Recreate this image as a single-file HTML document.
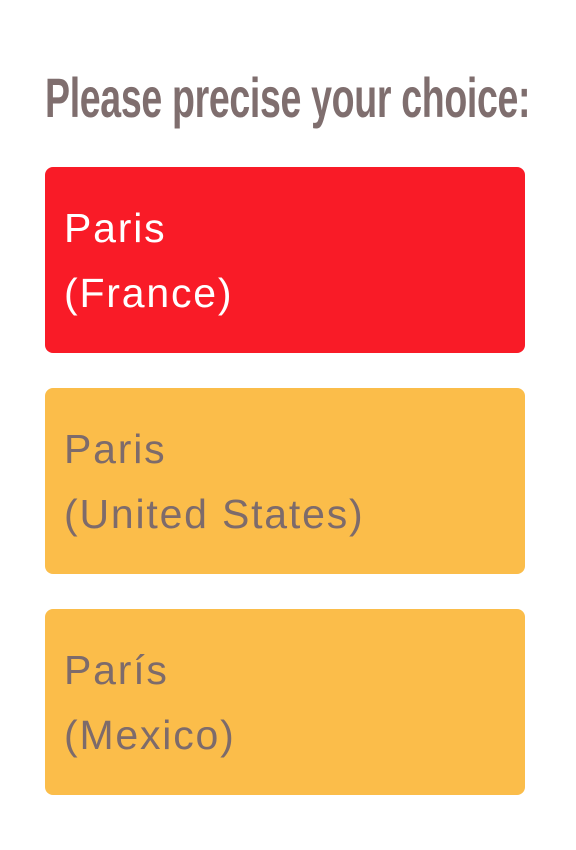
<!DOCTYPE html>
<html><head><meta charset="utf-8"><style>
html,body{margin:0;padding:0;background:#fff;width:576px;height:850px;overflow:hidden}
h1{position:absolute;left:45px;top:68px;margin:0;font:bold 56px/60px "Liberation Sans",sans-serif;color:#7f6e6e;white-space:nowrap;transform-origin:0 0;transform:scaleX(0.67);letter-spacing:-0.5px}
.b{position:absolute;left:45px;width:480px;height:186px;border-radius:8px;box-sizing:border-box;padding-left:19px;font:41px/65px "Liberation Sans",sans-serif;letter-spacing:1.8px;color:#7d6b6b}
.b div{position:absolute;left:19px}
.r{background:#f91b27;color:#fff}
.y{background:#fbbd4a}
</style></head><body>
<h1>Please precise your choice:</h1>
<div class="b r" style="top:167px"><div style="top:29px">Paris</div><div style="top:94px">(France)</div></div>
<div class="b y" style="top:388px"><div style="top:29px">Paris</div><div style="top:94px">(United States)</div></div>
<div class="b y" style="top:609px"><div style="top:29px">París</div><div style="top:94px">(Mexico)</div></div>
</body></html>
